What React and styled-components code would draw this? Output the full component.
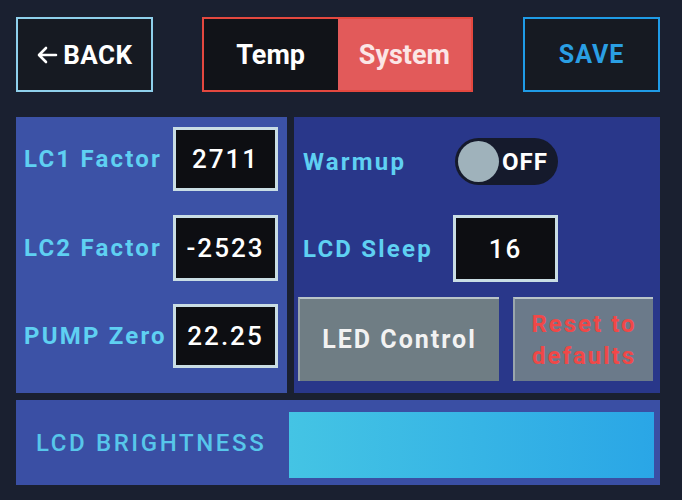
import styled, { createGlobalStyle } from 'styled-components';
import { useState } from 'react';

const Global = createGlobalStyle`
html, body { margin: 0; padding: 0; }
body {
  width: 682px;
  height: 500px;
  background: #1a2030;
  font-family: Roboto, "Liberation Sans", sans-serif;
  overflow: hidden;
}
`;

export default function App() {
  const [tab, setTab] = useState('system');
  const [warmup, setWarmup] = useState(false);

  return (
    <Screen>
      <Global />
      <Header>
        <OutlineButton $color="#8fd0ec" $text="#ffffff">
          <svg width="22" height="20" viewBox="0 0 22 20">
            <path d="M20 10H4M10 3L3 10l7 7" fill="none" stroke="#fff" strokeWidth="2.6" strokeLinecap="round" strokeLinejoin="round" />
          </svg>
          BACK
        </OutlineButton>
        <Tabs>
          <Tab $active={tab === 'temp'} onClick={() => setTab('temp')}>Temp</Tab>
          <Tab $active={tab === 'system'} onClick={() => setTab('system')}>System</Tab>
        </Tabs>
        <OutlineButton $color="#1f9be6" $text="#2a9fe4" $spaced>SAVE</OutlineButton>
      </Header>

      <Panels>
        <LeftPanel>
          <Row>
            <Label>LC1 Factor</Label>
            <ValueBox>2711</ValueBox>
          </Row>
          <Row>
            <Label>LC2 Factor</Label>
            <ValueBox $h={66}>-2523</ValueBox>
          </Row>
          <Row>
            <Label>PUMP Zero</Label>
            <ValueBox>22.25</ValueBox>
          </Row>
        </LeftPanel>

        <RightPanel>
          <SetRow>
            <Label>Warmup</Label>
            <Toggle onClick={() => setWarmup(!warmup)}>
              <Knob />
              {warmup ? 'ON' : 'OFF'}
            </Toggle>
          </SetRow>
          <SetRow>
            <Label>LCD Sleep</Label>
            <ValueBox $w={105} $h={67}>16</ValueBox>
          </SetRow>
          <ButtonRow>
            <GrayButton $w={201} $text="#f2f2f2" $bg="#6f7d84">LED Control</GrayButton>
            <GrayButton $w={140} $text="#f04848" $bg="#6b7a8a" $small>Reset to<br />defaults</GrayButton>
          </ButtonRow>
        </RightPanel>
      </Panels>

      <BottomPanel>
        <SliderLabel>LCD BRIGHTNESS</SliderLabel>
        <SliderBar />
      </BottomPanel>
    </Screen>
  );
}

const Screen = styled.div`
width: 682px;
height: 500px;
box-sizing: border-box;
padding: 17px 22px 0px 16px;
display: flex;
flex-direction: column;
`;

const Header = styled.div`
display: flex;
align-items: center;
height: 75px;
`;

const OutlineButton = styled.div`
width: 137px;
height: 75px;
box-sizing: border-box;
border: 2px solid ${p => p.$color};
display: flex;
align-items: center;
justify-content: center;
gap: 5px;
color: ${p => p.$text};
font-weight: 700;
font-size: ${p => (p.$spaced ? '25px' : '26px')};
letter-spacing: ${p => (p.$spaced ? '1px' : '0.5px')};
background: #161a22;
cursor: pointer;
`;

const Tabs = styled.div`
display: flex;
width: 272px;
height: 75px;
box-sizing: border-box;
border: 2px solid #e4483f;
margin-left: 49px;
margin-right: 50px;
`;

const Tab = styled.div`
flex: 1;
display: flex;
align-items: center;
justify-content: center;
font-size: 27px;
font-weight: 700;
color: ${p => (p.$active ? '#fbe6e6' : '#ffffff')};
background: ${p => (p.$active ? '#e25a5a' : '#111318')};
cursor: pointer;
`;

const Panels = styled.div`
display: flex;
gap: 7px;
margin-top: 25px;
height: 276px;
`;

const LeftPanel = styled.div`
width: 271px;
box-sizing: border-box;
background: #3c52a6;
padding: 10px 9px 25px 8px;
display: flex;
flex-direction: column;
justify-content: space-between;
`;

const RightPanel = styled.div`
flex: 1;
box-sizing: border-box;
background: #29378a;
padding: 21px 7px 12px 4px;
display: flex;
flex-direction: column;
`;

const Row = styled.div`
display: flex;
align-items: center;
justify-content: space-between;
`;

const SetRow = styled.div`
display: flex;
align-items: center;
padding-left: 5px;

& + & {
  margin-top: 30px;
}

& > :first-child {
  width: 150px;
}
`;

const Label = styled.div`
color: #5fd0f2;
font-size: 24px;
font-weight: 700;
letter-spacing: 2.2px;
white-space: nowrap;
`;

const ValueBox = styled.div`
width: ${p => p.$w || 105}px;
height: ${p => p.$h || 64}px;
box-sizing: border-box;
border: 3px solid #c9dde4;
background: #0d0e12;
color: #ffffff;
font-size: 26px;
font-weight: 500;
letter-spacing: 2px;
display: flex;
align-items: center;
justify-content: center;
`;

const Toggle = styled.div`
width: 103px;
height: 47px;
margin-left: 2px;
border-radius: 24px;
background: #151a2c;
display: flex;
align-items: center;
gap: 3px;
padding-left: 3px;
box-sizing: border-box;
color: #ffffff;
font-weight: 700;
font-size: 24px;
letter-spacing: 1px;
cursor: pointer;
`;

const Knob = styled.div`
width: 41px;
height: 41px;
border-radius: 50%;
background: #9fb2bb;
`;

const ButtonRow = styled.div`
display: flex;
justify-content: space-between;
margin-top: auto;
height: 84px;
`;

const GrayButton = styled.div`
width: ${p => p.$w}px;
box-sizing: border-box;
background: ${p => p.$bg};
border-top: 2px solid #b9c4c8;
border-left: 2px solid #9aa6ac;
display: flex;
align-items: center;
justify-content: center;
text-align: center;
color: ${p => p.$text};
font-weight: 700;
font-size: ${p => (p.$small ? '24px' : '25px')};
letter-spacing: 2px;
line-height: ${p => (p.$small ? '32px' : '28px')};
cursor: pointer;
`;

const BottomPanel = styled.div`
margin-top: 7px;
height: 85px;
background: #3a4fa4;
display: flex;
align-items: center;
padding: 4px 6px 0px 20px;
box-sizing: border-box;
`;

const SliderLabel = styled.div`
color: #57c6ea;
font-size: 24px;
font-weight: 500;
letter-spacing: 2.6px;
width: 253px;
margin-top: -4px;
`;

const SliderBar = styled.div`
flex: 1;
height: 66px;
background: linear-gradient(90deg, #44c4e4, #2aa6e6);
`;
